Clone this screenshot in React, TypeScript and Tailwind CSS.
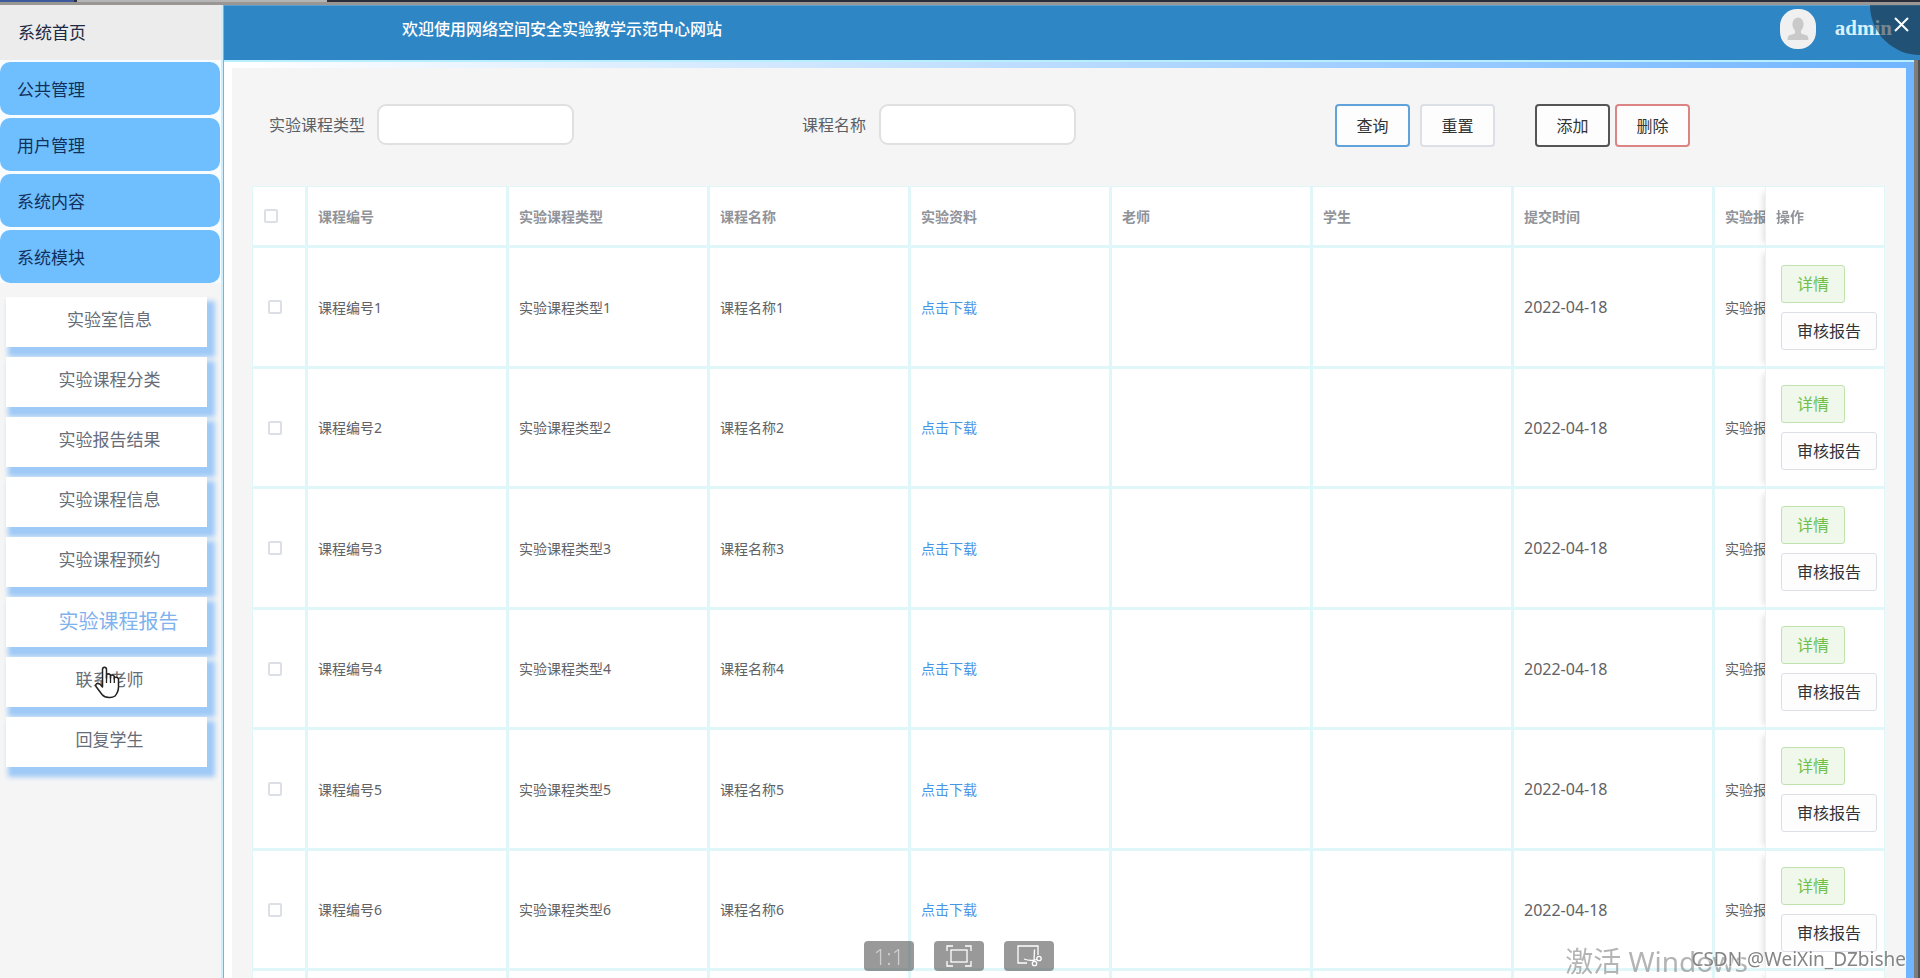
import React from "react";

const topMenu = ["公共管理", "用户管理", "系统内容", "系统模块"];

const subMenu = [
  "实验室信息",
  "实验课程分类",
  "实验报告结果",
  "实验课程信息",
  "实验课程预约",
  "实验课程报告",
  "联系老师",
  "回复学生",
];

const activeItem = "实验课程报告";

const columns = [
  "课程编号",
  "实验课程类型",
  "课程名称",
  "实验资料",
  "老师",
  "学生",
  "提交时间",
  "实验报告",
];

const rows = [1, 2, 3, 4, 5, 6, 7];

const headCell =
  "h-[61px] border-r-3 border-b-3 border-[#e0f7fa] bg-white pl-[10px] text-left font-bold text-[#909399]";
const cell = "border-r-3 border-b-3 border-[#e0f7fa] bg-white pl-[10px] whitespace-nowrap";
const fixedCell =
  "sticky right-0 border-r border-b-3 border-l border-[#e0f7fa] bg-white shadow-[-7px_0_6px_-5px_rgba(0,0,0,0.12)]";
const box = "block size-[14px] appearance-none rounded-[2px] border-2 border-[#dcdfe6] bg-white";
const formButton =
  "h-[43px] w-[75px] rounded-[4px] border-2 bg-[#fdfdfe] text-[16px] text-[#333]";

function TopStrip() {
  return (
    <div className="shrink-0">
      <div className="flex h-[2px] bg-[#2b2d3a]">
        <div className="w-[74px] bg-[#3c5a9c]" />
        <div className="ml-[3px] w-[250px] bg-[#b5b5b5]" />
      </div>
      <div className="h-[3px] bg-[#9a9694]" />
    </div>
  );
}

function Sidebar() {
  return (
    <aside className="flex w-[224px] shrink-0 flex-col border-r border-[#7fb0da] bg-[#f5f5f5]">
      <div className="flex grow flex-col border-r-2 border-[#cdeefc]">
        <a href="#home" className="flex h-[55px] items-center bg-[#ececec] pl-[18px] text-[17px] text-[#1c2a44]">
          系统首页
        </a>
        <nav className="flex flex-col gap-[3px] bg-[#f9fcfe] pt-[2px]">
          {topMenu.map((t) => (
            <a
              key={t}
              href="#menu"
              className="mr-px flex h-[53px] items-center rounded-[10px] bg-[#6fbfff] pt-[2px] pl-[17px] text-[17px] text-[#12305c]"
            >
              {t}
            </a>
          ))}
        </nav>
        <nav className="mt-[14px] mr-[14px] ml-[6px] flex flex-col gap-[10px]">
          {subMenu.map((t) => (
            <a
              key={t}
              href="#sub"
              className={
                "relative flex h-[50px] items-center justify-center bg-white shadow-[5px_7px_5px_3px_#9fc9f6] " +
                (t === activeItem
                  ? "pl-[24px] text-[20px] text-[#7fb2ee]"
                  : "pb-[4px] pl-[6px] text-[17px] text-[#666d78]")
              }
            >
              {t}
            </a>
          ))}
        </nav>
      </div>
    </aside>
  );
}

function Header() {
  return (
    <header className="flex h-[55px] shrink-0 items-center justify-between border-t border-[#5a9fd0] bg-[#2f86c4] pr-[28px] pl-[178px] text-white">
      <h1 className="pb-[8px] text-[16px] font-medium">欢迎使用网络空间安全实验教学示范中心网站</h1>
      <div className="flex items-center gap-[19px] pb-[8px]">
        <svg width="36" height="40" viewBox="0 0 36 40" aria-label="头像">
          <rect width="36" height="40" rx="17" fill="#f0f0f0" />
          <ellipse cx="18" cy="15.5" rx="5.600" ry="7" fill="#c9c9c9" />
          <path d="M15 20h6v4.500l5.500 1.800q2 .8 2 4.700h-21q0-3.900 2-4.700L15 24.500z" fill="#c9c9c9" />
        </svg>
        <span className="font-['Liberation_Serif',serif] text-[21px] font-bold text-[#d9f1fb]">admin</span>
      </div>
    </header>
  );
}

function SearchForm() {
  return (
    <form className="flex items-start pt-[36px] pl-[37px] text-[#5c5f66]">
      <div className="flex h-[41px] items-center">
        <label htmlFor="ctype" className="text-[16px]">
          实验课程类型
        </label>
        <input
          id="ctype"
          type="text"
          className="ml-[12px] h-[41px] w-[197px] rounded-[9px] border-2 border-[#e0e0e0] bg-white px-3"
        />
        <label htmlFor="cname" className="ml-[228px] text-[16px]">
          课程名称
        </label>
        <input
          id="cname"
          type="text"
          className="ml-[13px] h-[41px] w-[197px] rounded-[9px] border-2 border-[#e0e0e0] bg-white px-3"
        />
      </div>
      <div className="ml-[259px] flex">
        <button type="button" className={formButton + " border-[#5fa3da]"}>
          查询
        </button>
        <button type="button" className={formButton + " ml-[10px] border-[#dcdfe6]"}>
          重置
        </button>
        <button type="button" className={formButton + " ml-[40px] border-[#555]"}>
          添加
        </button>
        <button type="button" className={formButton + " ml-[5px] border-[#dc8484]"}>
          删除
        </button>
      </div>
    </form>
  );
}

function ReportTable() {
  return (
    <div className="mt-[39px] mr-[21px] ml-[20px] overflow-hidden border-l border-[#e0f7fa]">
      <table className="w-[1782px] table-fixed border-separate border-spacing-0 border-t border-[#e0f7fa] text-[14px] text-[#606266]">
        <colgroup>
          <col className="w-[55px]" />
          {columns.map((c) => (
            <col key={c} className="w-[201px]" />
          ))}
          <col className="w-[120px]" />
        </colgroup>
        <thead>
          <tr>
            <th className="border-r-3 border-b-3 border-[#e0f7fa] bg-white pl-[11px]">
              <input type="checkbox" aria-label="全选" className={box} />
            </th>
            {columns.map((c) => (
              <th key={c} className={headCell}>
                {c}
              </th>
            ))}
            <th className={fixedCell + " pl-[10px] text-left font-bold text-[#909399]"}>操作</th>
          </tr>
        </thead>
        <tbody>
          {rows.map((n) => (
            <tr key={n} className="odd:h-[121px] even:h-[120px]">
              <td className="border-r-3 border-b-3 border-[#e0f7fa] bg-white pl-[15px]">
                <input type="checkbox" aria-label={"选择" + n} className={box} />
              </td>
              <td className={cell}>课程编号{n}</td>
              <td className={cell}>实验课程类型{n}</td>
              <td className={cell}>课程名称{n}</td>
              <td className={cell}>
                <a href="#download" className="text-[#4a94e6]">
                  点击下载
                </a>
              </td>
              <td className={cell} />
              <td className={cell} />
              <td className={cell + " text-[16px]"}>2022-04-18</td>
              <td className={cell}>实验报告{n}</td>
              <td className={fixedCell + " pl-[15px]"}>
                <div className="flex flex-col items-start gap-[9px] text-[16px]">
                  <button
                    type="button"
                    className="h-[38px] w-[64px] rounded-[3px] border border-[#bfe2ae] bg-[#eff8ea] text-[#6fc04a]"
                  >
                    详情
                  </button>
                  <button
                    type="button"
                    className="h-[38px] w-[96px] rounded-[3px] border border-[#dcdfe6] bg-[#fdfdfe] text-[#333]"
                  >
                    审核报告
                  </button>
                </div>
              </td>
            </tr>
          ))}
        </tbody>
      </table>
    </div>
  );
}

function ViewerTools() {
  const tool =
    "flex h-[30px] w-[50px] items-center justify-center rounded-[4px] bg-[rgba(90,90,90,0.62)]";
  return (
    <div className="absolute inset-x-0 bottom-[7px] flex justify-center gap-[20px] pr-[2px]">
      <button type="button" className={tool + " text-[22px] font-light text-[#d0d0d0]"}>
        1:1
      </button>
      <button type="button" aria-label="全屏" className={tool}>
        <svg width="26" height="22" viewBox="0 0 26 22" fill="none" stroke="#fff" strokeWidth="1.300">
          <rect x="5" y="5" width="16" height="12" />
          <path d="M1 6V1h6M19 1h6v5M25 16v5h-6M7 21H1v-5" />
        </svg>
      </button>
      <button type="button" aria-label="截图" className={tool}>
        <svg width="26" height="22" viewBox="0 0 26 22" fill="none" stroke="#fff" strokeWidth="1.300">
          <path d="M11 18H2V1h20v9" />
          <path d="M18.500 4.500L18 16M8 14q6 2.500 13 .5" />
          <circle cx="18.500" cy="18.500" r="2.200" />
          <circle cx="23" cy="13.500" r="2.200" />
        </svg>
      </button>
    </div>
  );
}

function CloseCorner() {
  return (
    <button
      type="button"
      aria-label="关闭"
      className="absolute top-[5px] right-0 size-[50px] rounded-bl-full bg-[rgba(20,30,40,0.5)]"
    >
      <svg className="absolute top-[12px] right-[11px]" width="15" height="15" viewBox="0 0 15 15" stroke="#fff" strokeWidth="2">
        <path d="M1 1l13 13M14 1L1 14" />
      </svg>
    </button>
  );
}

function HandCursor() {
  return (
    <svg className="pointer-events-none absolute top-[666px] left-[94px]" width="26" height="33" viewBox="0 0 26 33">
      <path
        d="M8.500 18V3.500Q8.500 1.200 10.500 1.200T12.500 3.500V12V8.500Q14.500 7 16.500 9V12V9.500Q18.500 8.300 20.300 10.300V13V11.500Q23.500 10.500 24.500 13V21Q24.500 26 21 30Q18.500 31.800 15 31.500Q10.500 31.500 8 28.500L2 20.500Q1.200 18 3.500 17.500T8.500 21Z"
        fill="#fff"
        stroke="#222"
        strokeWidth="1.500"
        strokeLinejoin="round"
      />
      <path d="M12.500 9V17M16.500 10V17M20.300 11V17" stroke="#222" strokeWidth="1.300" fill="none" />
    </svg>
  );
}

export default function App() {
  return (
    <div className="relative flex h-screen flex-col overflow-hidden bg-white font-['Noto_Sans','Noto_Sans_CJK_SC',sans-serif]">
      <TopStrip />
      <div className="flex min-h-0 grow">
        <Sidebar />
        <div className="flex min-w-0 grow flex-col">
          <Header />
          <div className="flex min-h-0 grow">
            <main className="flex min-w-0 grow border-t-2 border-[#b9eeff] bg-linear-to-r from-white to-[#6fb5ff] px-[8px] pt-[6px]">
              <div className="min-w-0 grow bg-[#f5f5f5]">
                <SearchForm />
                <ReportTable />
              </div>
            </main>
            <div className="w-[6px] shrink-0 border-r-2 border-[#505050] bg-[#7d7d7d]" />
          </div>
        </div>
      </div>
      <ViewerTools />
      <CloseCorner />
      <HandCursor />
      <p className="absolute right-[172px] bottom-[-1px] text-[28px] leading-[36px] text-[rgba(130,130,130,0.6)]">激活 Windows</p>
      <p className="absolute right-[14px] bottom-[7px] text-[19px] leading-[24px] text-[#858585] [text-shadow:1px_1px_1px_#fff]">
        CSDN @WeiXin_DZbishe
      </p>
    </div>
  );
}
